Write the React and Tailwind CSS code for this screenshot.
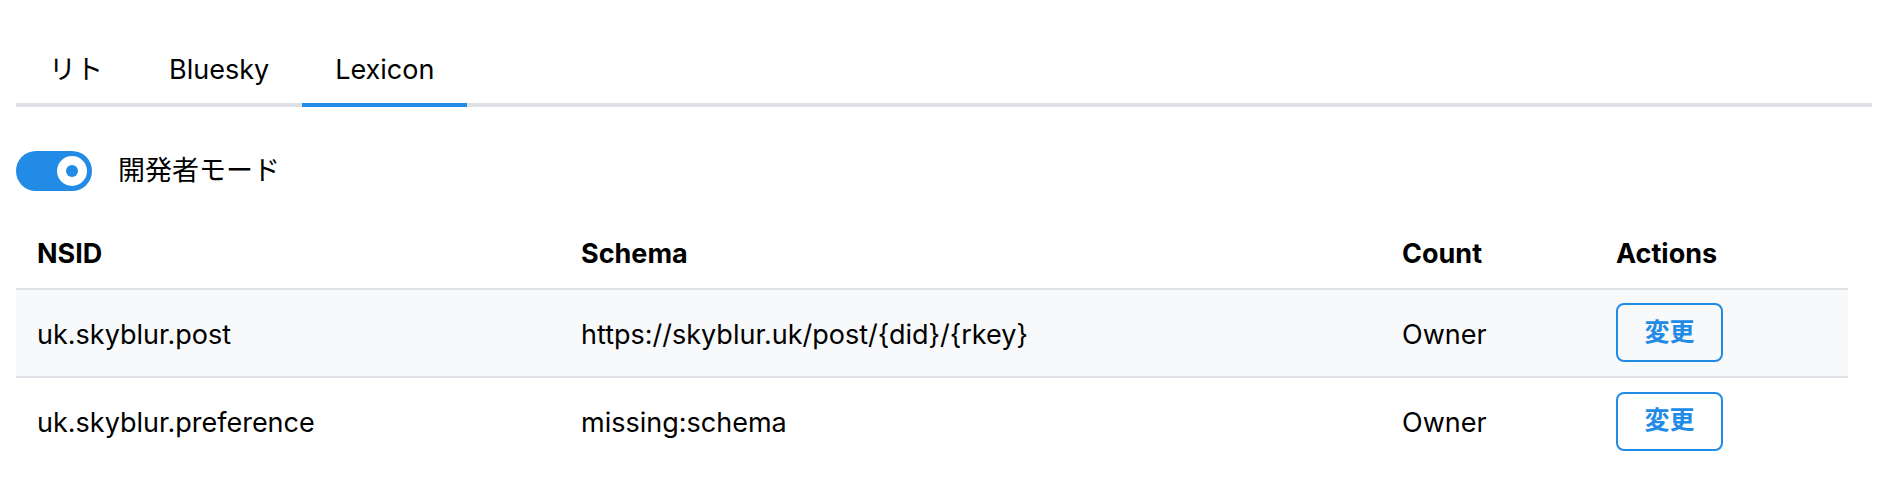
import { useState } from "react";

const rows = [
  { nsid: "uk.skyblur.post", schema: "https://skyblur.uk/post/{did}/{rkey}", count: "Owner" },
  { nsid: "uk.skyblur.preference", schema: "missing:schema", count: "Owner" },
];

const tabs = ["リト", "Bluesky", "Lexicon"];

export default function App() {
  const [active, setActive] = useState("Lexicon");
  const [devMode, setDevMode] = useState(true);

  return (
    <div className="min-h-screen bg-white pl-[16px] pr-[10px] pt-[35px] text-black font-['Inter','Noto_Sans_CJK_JP',sans-serif]">
      <div className="flex border-b-[4px] border-[#dee2e6]">
        {tabs.map((t) => (
          <button
            key={t}
            onClick={() => setActive(t)}
            className={`-mb-[4px] h-[72px] border-b-[4px] px-[33px] text-[27px] leading-none ${
              active === t ? "border-[#228be6]" : "border-transparent"
            }`}
          >
            {t}
          </button>
        ))}
      </div>

      <div className="mt-[44px] flex items-center gap-[26px]">
        <button
          onClick={() => setDevMode(!devMode)}
          className={`flex h-[40px] w-[76px] items-center rounded-full px-[5px] ${
            devMode ? "justify-end bg-[#228be6]" : "justify-start bg-[#e9ecef]"
          }`}
        >
          <span className="flex h-[30px] w-[30px] items-center justify-center rounded-full bg-white">
            <span className="h-[12px] w-[12px] rounded-full bg-[#228be6]" />
          </span>
        </button>
        <span className="text-[27px]">開発者モード</span>
      </div>

      <table className="mt-[29px] w-[1832px] table-fixed border-collapse text-[27px]">
        <thead>
          <tr className="h-[68px] border-b-[2px] border-[#dee2e6] text-left">
            <th className="w-[546px] pl-[21px] font-bold">NSID</th>
            <th className="w-[820px] pl-[19px] font-bold">Schema</th>
            <th className="w-[214px] pl-[20px] font-bold">Count</th>
            <th className="pl-[20px] font-bold">Actions</th>
          </tr>
        </thead>
        <tbody>
          {rows.map((r, i) => (
            <tr key={r.nsid} className={`h-[88px] ${i === 0 ? "border-b-[2px] border-[#dee2e6] bg-[#f8f9fa]" : ""}`}>
              <td className="pl-[21px] pt-[5px]">{r.nsid}</td>
              <td className="pl-[19px] pt-[5px]">{r.schema}</td>
              <td className="pl-[20px] pt-[5px]">{r.count}</td>
              <td className="pl-[20px]">
                <button className="h-[59px] w-[107px] rounded-[8px] border-[2px] border-[#228be6] text-[25px] font-semibold text-[#228be6]">
                  変更
                </button>
              </td>
            </tr>
          ))}
        </tbody>
      </table>
    </div>
  );
}
